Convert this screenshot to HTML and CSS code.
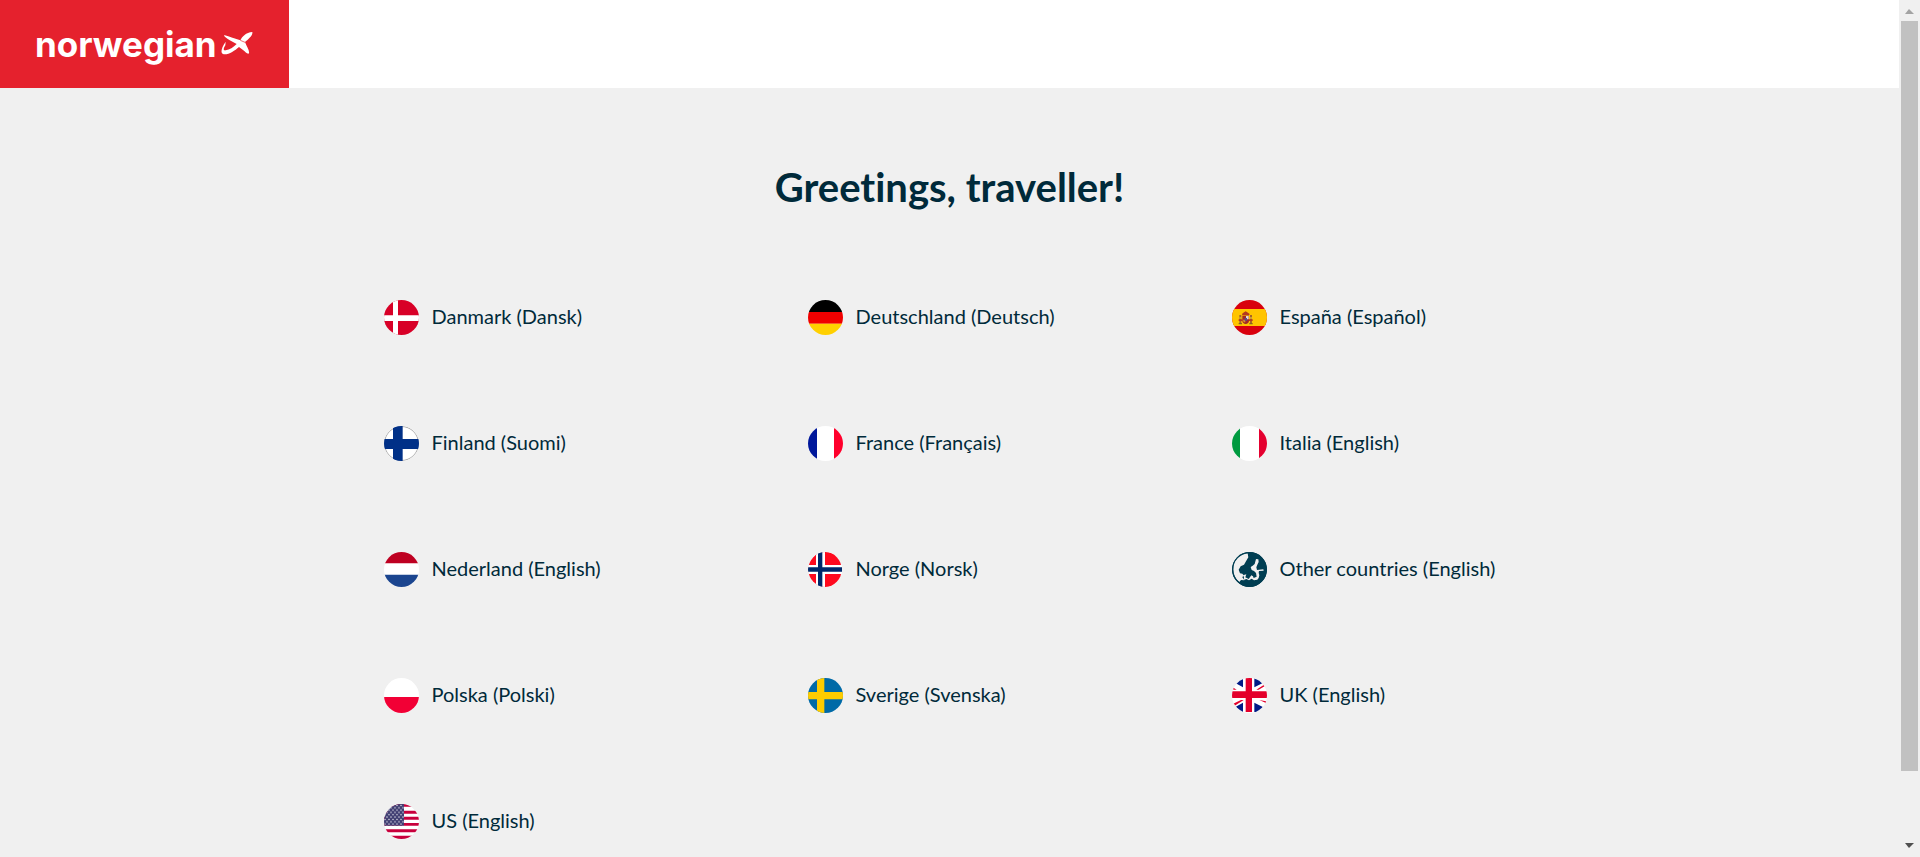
FILE: index.html
```html
<!DOCTYPE html>
<html lang="en">
<head>
<meta charset="utf-8">
<meta name="viewport" content="width=device-width, initial-scale=1">
<title>Norwegian</title>
<link rel="stylesheet" href="styles.css">
</head>
<body class="window">
<div class="page">
  <header class="header">
    <a class="logo" href="#">
      <span class="logo-text">norwegian</span>
      <svg class="logo-plane" viewBox="0 0 96 72" aria-hidden="true">
        <path fill="#fff" d="M9 9C26 14 43 20 58 25C63 14 75 1 94 0C96 11 82 21 72 30C76 42 86 54 84 64C80 68 73 60 67 55L54 45C41 56 25 68 9 67C-3 65 0 49 14 29L13 40C6 52 7 56 14 55C26 54 37 45 47 36L25 24C17 19 10 15 9 9Z"/>
        <path fill="none" stroke="#e5212d" stroke-width="2" d="M58 25L72 31"/>
      </svg>
    </a>
  </header>
  <main class="main">
    <h1 class="title">Greetings, traveller!</h1>
    <ul class="countries">
      <li><a class="country" href="#">
        <svg class="flag" viewBox="0 0 105 105" aria-hidden="true"><path fill="#d80027" d="M0 0H105V105H0z"/><path fill="#fff" d="M27 0H42V105H27zM0 46H105V63H0z"/></svg>
        <span class="label">Danmark (Dansk)</span></a></li>
      <li><a class="country" href="#">
        <svg class="flag" viewBox="0 0 105 105" aria-hidden="true"><path d="M0 0H105V36H0z"/><path fill="#f00000" d="M0 36H105V71H0z"/><path fill="#ffd000" d="M0 71H105V105H0z"/></svg>
        <span class="label">Deutschland (Deutsch)</span></a></li>
      <li><a class="country" href="#">
        <svg class="flag" viewBox="0 0 105 105" aria-hidden="true"><path fill="#d9000d" d="M0 0H105V105H0z"/><path fill="#ffc400" d="M0 27H105V78H0z"/>
          <path fill="#a5642b" d="M22 45H28V71H22zM54 45H60V71H54z"/><path fill="#d8b13a" d="M22 52H28V56H22zM54 52H60V56H54z"/><path fill="#b43a20" d="M30 42L34 38L41 34L48 38L53 42L51 46H31zM20 58H31V63H20zM51 58H62V63H51z"/><path fill="#a32828" d="M31 47H51V63Q50 71 41 72Q32 71 31 63z"/><path fill="#ddd" d="M42 48H50V58H42z"/><path fill="#d8942c" d="M33 59H40V67H35z"/><path fill="#5a4e87" d="M38 54H45V62H38z"/><path fill="#876321" d="M20 69H30V73H20zM52 69H62V73H52z"/></svg>
        <span class="label">España (Español)</span></a></li>
      <li><a class="country" href="#">
        <svg class="flag" viewBox="0 0 105 105" aria-hidden="true"><path fill="#fff" d="M0 0H105V105H0z"/><circle cx="52.500" cy="52.500" r="51" fill="none" stroke="#aaa" stroke-width="3"/><path fill="#003087" d="M27 0H56V105H27zM0 39H105V69H0z"/></svg>
        <span class="label">Finland (Suomi)</span></a></li>
      <li><a class="country" href="#">
        <svg class="flag" viewBox="0 0 105 105" aria-hidden="true"><path fill="#fff" d="M0 0H105V105H0z"/><path fill="#00189b" d="M0 0H27V105H0z"/><path fill="#ff002c" d="M78 0H105V105H78z"/></svg>
        <span class="label">France (Français)</span></a></li>
      <li><a class="country" href="#">
        <svg class="flag" viewBox="0 0 105 105" aria-hidden="true"><path fill="#fff" d="M0 0H105V105H0z"/><path fill="#009a40" d="M0 0H24V105H0z"/><path fill="#e4002f" d="M81 0H105V105H81z"/></svg>
        <span class="label">Italia (English)</span></a></li>
      <li><a class="country" href="#">
        <svg class="flag" viewBox="0 0 105 105" aria-hidden="true"><path fill="#fff" d="M0 0H105V105H0z"/><path fill="#be0021" d="M0 0H105V34H0z"/><path fill="#1b458f" d="M0 68H105V105H0z"/></svg>
        <span class="label">Nederland (English)</span></a></li>
      <li><a class="country" href="#">
        <svg class="flag" viewBox="0 0 105 105" aria-hidden="true"><path fill="#f0f0f0" d="M0 0H105V105H0z"/><ellipse cx="51" cy="52.500" rx="50" ry="52.500" fill="#ff0a1e"/><path fill="#fff" d="M24 0H51V105H24zM0 39H102V66H0z"/><path fill="#00286a" d="M30 0H43V105H30zM0 46H102V59H0z"/></svg>
        <span class="label">Norge (Norsk)</span></a></li>
      <li><a class="country" href="#">
        <svg class="flag" viewBox="0 0 105 105" aria-hidden="true"><path fill="#003e52" d="M0 0H105V105H0z"/>
          <path fill="#f0f0f0" d="M47 4C20 5 3 26 4 53C4 68 11 80 22 90L27 84L37 85L31 76L35 70L31 65L24 64L20 53L26 43L36 38L42 28L49 16z"/>
          <path fill="#f0f0f0" d="M72 21L79 22L80 30L76 38L73 46L75 54L94 52L95 56L81 57L80 62L82 70L80 78L76 83L66 85L59 80L51 85L43 81L35 84L36 76L33 70L43 67L40 76L50 81L58 70L63 73L65 78L74 74L72 63L66 57L59 54L56 45L62 41L68 36z"/>
          <circle cx="52.500" cy="52.500" r="51" fill="none" stroke="#003e52" stroke-width="4"/></svg>
        <span class="label">Other countries (English)</span></a></li>
      <li><a class="country" href="#">
        <svg class="flag" viewBox="0 0 105 105" aria-hidden="true"><path fill="#fff" d="M0 0H105V105H0z"/><path fill="#f20035" d="M0 57H105V105H0z"/></svg>
        <span class="label">Polska (Polski)</span></a></li>
      <li><a class="country" href="#">
        <svg class="flag" viewBox="0 0 105 105" aria-hidden="true"><path fill="#006aa7" d="M0 0H105V105H0z"/><path fill="#fecc00" d="M27 0H49V105H27zM0 42H105V64H0z"/></svg>
        <span class="label">Sverige (Svenska)</span></a></li>
      <li><a class="country" href="#">
        <svg class="flag" viewBox="0 0 105 105" aria-hidden="true"><path fill="#fff" d="M0 0H105V105H0z"/><path fill="#001b86" d="M10 15L33 28V0H12zM67 0V28L94 14L85 0zM33 74V102H14L10 87zM67 74L94 88L85 102H67z"/><path fill="#e4002b" d="M41 0H60V102H41zM0 40H105V60H0zM2 28L14 35H4zM73 35L96 20L99 24L80 35zM2 78L27 66H35L7 84zM82 66L102 70V75z"/></svg>
        <span class="label">UK (English)</span></a></li>
      <li><a class="country" href="#">
        <svg class="flag" viewBox="0 0 105 105" aria-hidden="true">
          <defs><pattern id="stars" width="12" height="14" patternUnits="userSpaceOnUse"><circle cx="3" cy="4" r="2" fill="#fff"/><circle cx="9" cy="11" r="2" fill="#fff"/></pattern></defs>
          <path fill="#fff" d="M0 0H105V105H0z"/><path fill="#c8003c" d="M0 0H105V8H0zM0 20H105V29H0zM0 38H105V47H0zM0 57H105V65H0zM0 76H105V85H0zM0 95H105V105H0z"/><path fill="#413f73" d="M0 0H60V65H0z"/><path fill="url(#stars)" d="M0 0H60V65H0z"/></svg>
        <span class="label">US (English)</span></a></li>
    </ul>
  </main>
</div>
<div class="scrollbar" aria-hidden="true">
  <svg class="scroll-arrow" viewBox="0 0 21 21"><path fill="#a3a3a3" d="M6 14L10 9L15 14z"/></svg>
  <div class="scroll-track"><div class="scroll-thumb"></div></div>
  <svg class="scroll-arrow" viewBox="0 0 21 21"><path fill="#505050" d="M6 7H15L10 12z"/></svg>
</div>
</body>
</html>
```
FILE: styles.css
```css
* {
  box-sizing: border-box;
}

.window {
  display: flex;
  height: 100vh;
  margin: 0;
  overflow: hidden;
  background: #f0f0f0;
  color: #002a3a;
  font-family: Lato, "Open Sans", sans-serif;
  font-variant-ligatures: none;
}

.page {
  flex: 1;
  min-width: 0;
  overflow: hidden;
}

.header {
  display: flex;
  height: 88px;
  background: #fff;
}

.logo {
  display: flex;
  align-items: center;
  gap: 4px;
  padding: 0 36px 0 35px;
  background: #e5212d;
  color: #fff;
  text-decoration: none;
}

.logo-text {
  font: 700 35px/40px Inter, sans-serif;
}

.logo-plane {
  width: 32px;
  height: 24px;
}

.main {
  padding: 71px 24px 0;
}

.title {
  margin: 0;
  font-size: 40px;
  font-weight: 700;
  line-height: 56px;
  text-align: center;
}

.countries {
  display: grid;
  grid-template-columns: repeat(3, 1fr);
  max-width: 1272px;
  margin: 39px auto 0;
  padding: 0;
  list-style: none;
}

.country {
  display: flex;
  align-items: center;
  gap: 13px;
  height: 126px;
  padding-left: 70px;
  color: inherit;
  font-size: 20px;
  line-height: 32px;
  text-decoration: none;
}

.label {
  padding-bottom: 3px;
}

.flag {
  flex: none;
  width: 35px;
  height: 35px;
  border-radius: 50%;
}

.scrollbar {
  display: flex;
  flex: none;
  flex-direction: column;
  width: 21px;
  background: #f0f0f0;
}

.scroll-arrow {
  flex: none;
  width: 21px;
  height: 21px;
}

.scroll-track {
  flex: 1;
  padding: 0 2px;
}

.scroll-thumb {
  height: 92%;
  background: #c1c1c1;
}
```
